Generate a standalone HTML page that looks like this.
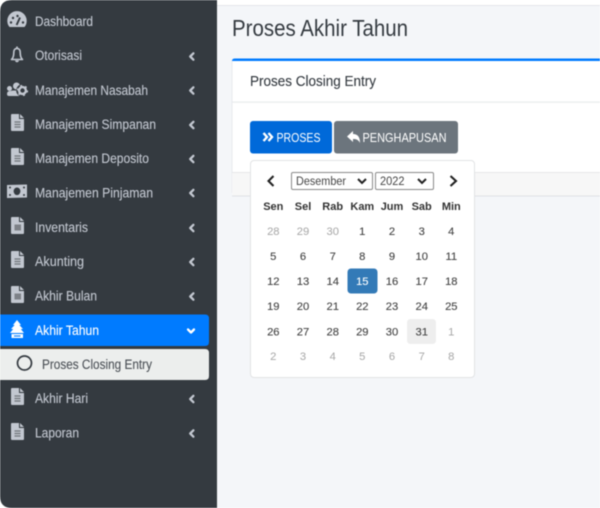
<!DOCTYPE html>
<html><head><meta charset="utf-8"><style>
html,body{margin:0;padding:0;width:600px;height:508px;overflow:hidden;background:#fff}
svg{display:block;filter:blur(.4px)}
text{font-family:"Liberation Sans",sans-serif}
.m{font-size:13.5px;fill:#c2c7d0;stroke:#c2c7d0;stroke-width:.12}
.c{font-size:11.2px;fill:#444;text-anchor:middle;stroke:#444;stroke-width:.12}
.g{fill:#aaa;stroke:#aaa;stroke-width:.05}
.h{font-size:11px;font-weight:700;fill:#333;text-anchor:middle}
.ch{fill:none;stroke:#c2c7d0;stroke-width:2.3;stroke-linecap:round;stroke-linejoin:round}
.i{fill:#c2c7d0}
</style></head><body>
<svg width="600" height="508" viewBox="0 0 600 508" xmlns="http://www.w3.org/2000/svg">
<defs>
<symbol id="f" viewBox="0 0 13 17" overflow="visible"><path class="i" d="M1 0H8V5H13V16Q13 17 12 17H1Q0 17 0 16V1Q0 0 1 0ZM9 0L13 4H9Z"/><path d="M3.500 8H9.500M3.500 10.500H9.500M3.500 13H9.500" stroke="#6f747a" stroke-width="1.300"/></symbol>
<symbol id="f2" viewBox="0 0 13 17" overflow="visible"><path class="i" d="M1 0H8V5H13V16Q13 17 12 17H1Q0 17 0 16V1Q0 0 1 0ZM9 0L13 4H9Z"/><rect x="3.500" y="7.500" width="6.500" height="6" fill="#7d8187"/></symbol>
<symbol id="l" viewBox="0 0 8 12" overflow="visible"><path class="ch" d="M5.400 2.800L2.200 6L5.400 9.200"/></symbol>
</defs>

<rect width="600" height="508" fill="#fff"/>
<rect x="217" y="5" width="383" height="503" fill="#f4f6f9"/>
<rect x="217" y="5" width="383" height="1" fill="#e4e6ea"/>
<path d="M12 0H217V508H12Q0 508 0 496V12Q0 0 12 0Z" fill="#343a40"/>

<!-- Sidebar icons -->
<path class="i" d="M9.500 27.500A9.700 9.700 0 1 1 24.500 27.500Z" transform="translate(0 -.5)"/>
<path d="M16.600 25L20 17.500" stroke="#343a40" stroke-width="1.900"/>
<circle cx="11" cy="22.500" r="1.200" fill="#343a40"/><circle cx="13" cy="18" r="1.200" fill="#343a40"/><circle cx="17.500" cy="16" r="1.200" fill="#343a40"/><circle cx="23" cy="22.500" r="1.200" fill="#343a40"/>
<path d="M11.500 59.500Q13.800 57.500 13.800 52.500Q13.800 48.500 17 48.500Q20.200 48.500 20.200 52.500Q20.200 57.500 22.500 59.500Z" fill="none" stroke="#c2c7d0" stroke-width="1.600" stroke-linejoin="round"/>
<path class="i" d="M16.200 46.500h1.600v2h-1.600zM15 60.500H19Q18.500 62.300 17 62.300T15 60.500Z"/>
<circle cx="16.500" cy="86" r="3.500" class="i"/><circle cx="9.500" cy="88.500" r="2.500" class="i"/>
<path class="i" d="M7 94Q7 91 10 91L13 90.500H19L20 96H9Q7 96 7 94Z"/>
<circle cx="22.500" cy="90.500" r="6.300" fill="#343a40"/>
<circle cx="22.500" cy="90.500" r="3.400" fill="none" stroke="#c2c7d0" stroke-width="2.400"/>
<circle cx="22.500" cy="90.500" r="5" fill="none" stroke="#c2c7d0" stroke-width="1.300" stroke-dasharray="2 3.240"/>
<use href="#f" x="11" y="114" width="13" height="17"/>
<use href="#f" x="11" y="148" width="13" height="17"/>
<path class="i" d="M7 185L27 184.500V197.500L7 198Z"/><ellipse cx="17" cy="191.300" rx="3.400" ry="3.800" fill="#343a40"/><circle cx="10" cy="187.500" r="1" fill="#343a40"/><circle cx="24" cy="187.500" r="1" fill="#343a40"/><circle cx="10" cy="195" r="1" fill="#343a40"/><circle cx="24" cy="195" r="1" fill="#343a40"/>
<use href="#f2" x="11" y="217" width="13" height="17"/>
<use href="#f" x="11" y="251" width="13" height="17"/>
<use href="#f2" x="11" y="286" width="13" height="17"/>
<use href="#f" x="11" y="388" width="13" height="17"/>
<use href="#f" x="11" y="423" width="13" height="17"/>

<!-- Sidebar text -->
<text class="m" x="35" y="25.800" textLength="58" lengthAdjust="spacingAndGlyphs">Dashboard</text>
<text class="m" x="35" y="59.800" textLength="47" lengthAdjust="spacingAndGlyphs">Otorisasi</text>
<text class="m" x="35" y="94.800" textLength="113" lengthAdjust="spacingAndGlyphs">Manajemen Nasabah</text>
<text class="m" x="35" y="128.800" textLength="121" lengthAdjust="spacingAndGlyphs">Manajemen Simpanan</text>
<text class="m" x="35" y="162.800" textLength="114" lengthAdjust="spacingAndGlyphs">Manajemen Deposito</text>
<text class="m" x="35" y="197.300" textLength="118" lengthAdjust="spacingAndGlyphs">Manajemen Pinjaman</text>
<text class="m" x="35" y="231.800" textLength="53" lengthAdjust="spacingAndGlyphs">Inventaris</text>
<text class="m" x="35" y="265.800" textLength="49" lengthAdjust="spacingAndGlyphs">Akunting</text>
<text class="m" x="35" y="300.500" textLength="62" lengthAdjust="spacingAndGlyphs">Akhir Bulan</text>
<text class="m" x="35" y="402.800" textLength="53" lengthAdjust="spacingAndGlyphs">Akhir Hari</text>
<text class="m" x="35" y="437.500" textLength="44" lengthAdjust="spacingAndGlyphs">Laporan</text>

<!-- Sidebar chevrons -->
<use href="#l" x="188" y="50.500" width="8" height="12"/>
<use href="#l" x="188" y="84.500" width="8" height="12"/>
<use href="#l" x="188" y="119" width="8" height="12"/>
<use href="#l" x="188" y="153" width="8" height="12"/>
<use href="#l" x="188" y="187" width="8" height="12"/>
<use href="#l" x="188" y="222" width="8" height="12"/>
<use href="#l" x="188" y="256" width="8" height="12"/>
<use href="#l" x="188" y="290.500" width="8" height="12"/>
<use href="#l" x="188" y="393" width="8" height="12"/>
<use href="#l" x="188" y="427.500" width="8" height="12"/>

<!-- Active item -->
<path d="M0 314.500H205Q209 314.500 209 318.500V342Q209 346 205 346H0Z" fill="#007bff"/>
<path fill="#fff" d="M17 320L21 325H19.300L23 329H20.800L24 333H10L13.200 329H11L14.700 325H13Z"/>
<path d="M11.500 334H23V338H11.500Z" fill="#fff"/><path d="M14 336H20.500" stroke="#007bff" stroke-width="1.100"/>
<text x="35" y="334.800" font-size="13.500" fill="#fff" stroke="#fff" stroke-width=".12" textLength="64" lengthAdjust="spacingAndGlyphs">Akhir Tahun</text>
<path d="M188 329.500L191 332.500L194 329.500" fill="none" stroke="#fff" stroke-width="2.300" stroke-linecap="round" stroke-linejoin="round"/>

<!-- Sub item -->
<path d="M0 349H205Q209 349 209 353V376Q209 380 205 380H0Z" fill="#eceeed"/>
<circle cx="24.500" cy="363" r="7" fill="none" stroke="#343a40" stroke-width="1.700"/>
<text x="42" y="368.800" font-size="13.500" fill="#4c5157" stroke="#4c5157" stroke-width=".1" textLength="110" lengthAdjust="spacingAndGlyphs">Proses Closing Entry</text>

<!-- Main -->
<text x="232" y="36" font-size="23" fill="#343a40" textLength="176" lengthAdjust="spacingAndGlyphs">Proses Akhir Tahun</text>
<path d="M232 195.500V61Q232 58.500 235 58.500H600V195.500H235Q232 195.500 232 193Z" fill="#fff"/>
<path d="M232 195V61Q232 58.500 235 58.500H600V61H232Z" fill="#007bff"/>
<path d="M232 61V193" stroke="#e4e6ea" stroke-width=".8"/>
<rect x="232" y="101.500" width="368" height="1.200" fill="#e9ebec"/>
<path d="M232 172H600V195.500H235Q232 195.500 232 193Z" fill="#f7f7f7"/>
<rect x="232" y="172" width="368" height="1" fill="#e6e7e8"/>
<rect x="232" y="195.500" width="368" height="1" fill="#dfe1e4"/>
<text x="250" y="86" font-size="14.500" fill="#343a40" stroke="#343a40" stroke-width=".1" textLength="126" lengthAdjust="spacingAndGlyphs">Proses Closing Entry</text>

<!-- Buttons -->
<rect x="250" y="121" width="82" height="32.500" rx="3" fill="#0069d9"/>
<path d="M263.500 133L267 137L263.500 141M268.500 133L272 137L268.500 141" fill="none" stroke="#fff" stroke-width="2.400"/>
<text x="276.500" y="141.800" font-size="13" fill="#fff" textLength="44" lengthAdjust="spacingAndGlyphs">PROSES</text>
<rect x="334" y="121" width="124" height="32.500" rx="3" fill="#6c757d"/>
<path fill="#fff" d="M347 136.500L353 131V134Q360 134 360 143Q358 138.500 353 139V142Z"/>
<text x="362.500" y="141.800" font-size="13" fill="#fff" textLength="84" lengthAdjust="spacingAndGlyphs">PENGHAPUSAN</text>

<!-- Datepicker -->
<path d="M258 160.500L265 155L272 160.500Z" fill="#fff"/>
<rect x="250.500" y="160.500" width="224" height="217" rx="3.500" fill="#fff" stroke="#e2e3e5"/>
<path d="M273.500 176L268.500 181L273.500 186M450.500 176L456 181L450.500 186" fill="none" stroke="#222" stroke-width="2.100"/>
<rect x="291.500" y="172.500" width="81" height="17" rx="1.500" fill="#fff" stroke="#8a8a8a"/>
<rect x="375.500" y="172.500" width="58" height="17" rx="1.500" fill="#fff" stroke="#8a8a8a"/>
<text x="296" y="185" font-size="11.500" fill="#444" textLength="50" lengthAdjust="spacingAndGlyphs">Desember</text>
<text x="380" y="185" font-size="11.500" fill="#444" textLength="24.500" lengthAdjust="spacingAndGlyphs">2022</text>
<path d="M358 179L362 183L366 179M418 179L422 183L426 179" fill="none" stroke="#222" stroke-width="2"/>

<text class="h" x="273.300" y="210">Sen</text><text class="h" x="303" y="210">Sel</text><text class="h" x="332.700" y="210">Rab</text><text class="h" x="362.300" y="210">Kam</text><text class="h" x="392" y="210">Jum</text><text class="h" x="421.700" y="210">Sab</text><text class="h" x="451.300" y="210">Min</text>

<rect x="347.500" y="268.500" width="30" height="25" rx="3.500" fill="#337ab7"/>
<rect x="407" y="319" width="29" height="25" rx="3.500" fill="#eee"/>

<g>
<text class="c g" x="273.300" y="235">28</text><text class="c g" x="303" y="235">29</text><text class="c g" x="332.700" y="235">30</text><text class="c" x="362.300" y="235">1</text><text class="c" x="392" y="235">2</text><text class="c" x="421.700" y="235">3</text><text class="c" x="451.300" y="235">4</text>
<text class="c" x="273.300" y="260">5</text><text class="c" x="303" y="260">6</text><text class="c" x="332.700" y="260">7</text><text class="c" x="362.300" y="260">8</text><text class="c" x="392" y="260">9</text><text class="c" x="421.700" y="260">10</text><text class="c" x="451.300" y="260">11</text>
<text class="c" x="273.300" y="285">12</text><text class="c" x="303" y="285">13</text><text class="c" x="332.700" y="285">14</text><text class="c" x="362.300" y="285" style="fill:#fff;stroke:#fff">15</text><text class="c" x="392" y="285">16</text><text class="c" x="421.700" y="285">17</text><text class="c" x="451.300" y="285">18</text>
<text class="c" x="273.300" y="310">19</text><text class="c" x="303" y="310">20</text><text class="c" x="332.700" y="310">21</text><text class="c" x="362.300" y="310">22</text><text class="c" x="392" y="310">23</text><text class="c" x="421.700" y="310">24</text><text class="c" x="451.300" y="310">25</text>
<text class="c" x="273.300" y="335.500">26</text><text class="c" x="303" y="335.500">27</text><text class="c" x="332.700" y="335.500">28</text><text class="c" x="362.300" y="335.500">29</text><text class="c" x="392" y="335.500">30</text><text class="c" x="421.700" y="335.500">31</text><text class="c g" x="451.300" y="335.500">1</text>
<text class="c g" x="273.300" y="360">2</text><text class="c g" x="303" y="360">3</text><text class="c g" x="332.700" y="360">4</text><text class="c g" x="362.300" y="360">5</text><text class="c g" x="392" y="360">6</text><text class="c g" x="421.700" y="360">7</text><text class="c g" x="451.300" y="360">8</text>
</g>
</svg>
</body></html>
